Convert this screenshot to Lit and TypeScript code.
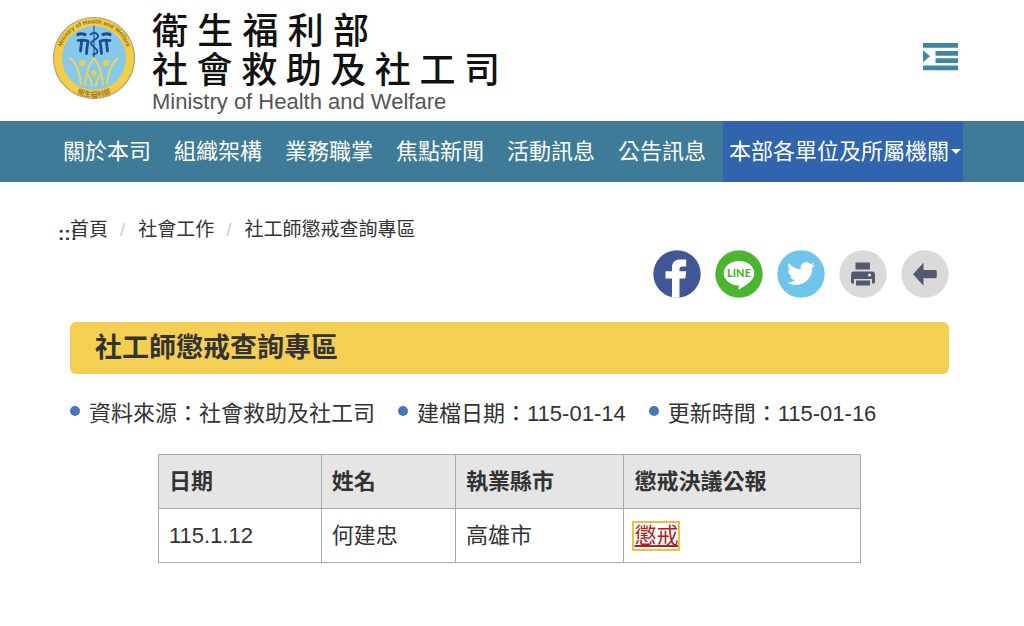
import { LitElement, html, css, svg } from "lit";
import { customElement } from "lit/decorators.js";

const emblem = svg`
  <svg class="emblem" viewBox="0 0 84 84" role="img" aria-label="衛生福利部">
    <defs>
      <path id="arc-top" d="M7.5 42a34.5 34.5 0 0 1 69 0" />
      <path id="arc-bottom" d="M3 42a39 39 0 0 0 78 0" />
    </defs>
    <circle cx="42" cy="42" r="40.5" fill="#f4cd45" stroke="#a9a07c" stroke-width="1.2" />
    <circle cx="42" cy="42" r="32" fill="#86c9ea" />
    <text class="ring-latin"><textPath href="#arc-top" startOffset="50%" text-anchor="middle">Ministry of Health and Welfare</textPath></text>
    <text class="ring-cjk"><textPath href="#arc-bottom" startOffset="50%" text-anchor="middle">衛生福利部</textPath></text>
    <g fill="none" stroke="#1a4d94" stroke-linecap="round" stroke-linejoin="round">
      <path d="M26 18.500q3-1.500 7 0M58 18.500q-3-1.500-7 0" stroke-width="3.2" />
      <path d="M26 24.500q5-1 10 .5-1 6-1.500 12.500M58 24.500q-5-1-10 .5 1 6 1.500 12.500M29.500 26l-1 9M54.500 26l1 9" stroke-width="2.8" />
      <path d="M42 10v32" stroke-width="1.1" />
      <path d="M38.500 18.500q3.500-3 6.500-.5t-2 5.500-4 4.500 4 4 2.500 4-4.500 2.500" stroke-width="1.9" />
    </g>
    <g fill="none" stroke="#edd35a" stroke-width="1.9" stroke-linecap="round">
      <path d="M18 42q9 7 11 26M42 42q-8 10-9 27M42 42q8 10 9 27M66 42q-9 7-11 26" />
      <path d="M36 59q3 4 4 11M48 59q-3 4-4 11" />
    </g>
    <g fill="#f4cd45"><circle cx="30" cy="47" r="3" /><circle cx="54" cy="47" r="3" /><circle cx="42" cy="57" r="2.6" /></g>
  </svg>`;

const facebook = svg`
  <svg class="icon" viewBox="0 0 48 48" aria-hidden="true">
    <circle cx="24" cy="24" r="23.7" fill="#3f5796" />
    <path fill="#fff" d="M19 47.4V28.6h-6.500v-7.400H19v-3.600c0-5.600 3.400-8 8.200-8h6v6.900h-3.700c-2.400 0-3 .9-3 2.800v1.900h6.700l-.8 7.400h-5.900v18.800a24 24 0 0 1-7.500 0z" />
  </svg>`;

const line = svg`
  <svg class="icon" viewBox="0 0 48 48" aria-hidden="true">
    <circle cx="24" cy="24" r="23.7" fill="#4cb52f" />
    <path fill="#fff" d="M24 11c8.500 0 15.300 5.400 15.300 12.200 0 3.200-1.500 5.900-4 8.200-3.200 3-7.400 5.700-10.800 7.800-1 .5-1.200 0-1-.9l.3-2.700C15.300 35.200 8.700 30 8.700 23.200 8.700 16.400 15.500 11 24 11z" />
    <text class="line-word" x="24" y="27" text-anchor="middle">LINE</text>
  </svg>`;

const twitter = svg`
  <svg class="icon" viewBox="0 0 48 48" aria-hidden="true">
    <circle cx="24" cy="24" r="23.7" fill="#6fc4e9" />
    <path fill="#fff" transform="translate(10 9.500) scale(1.170)" d="M23.950 4.570a10 10 0 0 1-2.820.770 4.960 4.960 0 0 0 2.160-2.720c-.950.550-2 .950-3.130 1.180a4.920 4.920 0 0 0-8.380 4.480C7.690 8.090 4.070 6.130 1.640 3.160a4.920 4.920 0 0 0 1.520 6.570 4.900 4.900 0 0 1-2.230-.610v.060a4.920 4.920 0 0 0 3.950 4.830 5 5 0 0 1-2.210.080 4.940 4.940 0 0 0 4.600 3.420A9.870 9.870 0 0 1 0 19.540a14 14 0 0 0 7.550 2.210c9.050 0 14-7.500 14-13.980 0-.210 0-.420-.020-.630a9.940 9.940 0 0 0 2.460-2.550z" />
  </svg>`;

const printer = svg`
  <svg class="icon" viewBox="0 0 48 48" aria-hidden="true">
    <circle cx="24" cy="24" r="23.7" fill="#dadada" />
    <g fill="#535a70">
      <path d="M16.500 12.500h14.500v7H16.500z" />
      <path d="M15 21.500h18a3 3 0 0 1 3 3V32q0 1.500-1.500 1.500H33V29H15v4.500h-1.500Q12 33.500 12 32v-7.500a3 3 0 0 1 3-3z" />
      <path d="M17 30.500h14v5H17z" />
    </g>
    <circle cx="30.500" cy="25" r="1.500" fill="#f1f1f1" />
  </svg>`;

const back = svg`
  <svg class="icon" viewBox="0 0 48 48" aria-hidden="true">
    <circle cx="24" cy="24" r="23.7" fill="#dadada" />
    <path fill="#535a70" d="M12 24.200l10.500-11.500v7.300H34q1.800 0 1.800 1.800v4.600q0 1.800-1.800 1.800H22.500v7.500z" />
  </svg>`;

const menuIcon = svg`
  <svg class="menu-icon" viewBox="0 0 36 28" aria-hidden="true">
    <path fill="#3f86a1" d="M0 0h35v4.800H0zM12.500 8H35v4.800H12.500zM12.500 15.300H35v4.800H12.500zM0 22.500h35v4.800H0zM0 7.300l7 6-7 6z" />
  </svg>`;

@customElement("app-root")
export class AppRoot extends LitElement {
  static styles = css`
    :host {
      display: block;
      min-height: 100vh;
      background: #fff;
      color: #333;
      font: 22px/32px "Liberation Sans", "Noto Sans CJK TC", sans-serif;
    }
    * { box-sizing: border-box; }
    a { color: inherit; text-decoration: none; }
    button {
      margin: 0;
      padding: 0;
      border: 0;
      background: none;
      color: inherit;
      font: inherit;
      cursor: pointer;
    }
    ul, ol { margin: 0; padding: 0; list-style: none; }

    .header {
      display: flex;
      align-items: flex-start;
      justify-content: space-between;
      padding: 9px 65px 4px 52px;
    }
    .brand { display: flex; gap: 16px; color: #111; }
    .emblem { display: block; width: 84px; height: 84px; margin-top: 7px; }
    .ring-latin { font: bold 6px "Liberation Sans", sans-serif; fill: #8a7430; }
    .ring-cjk { font: bold 7px "Noto Sans CJK TC", sans-serif; fill: #a8792c; }
    .names { display: flex; flex-direction: column; align-items: flex-start; }
    .name {
      font-family: "Noto Sans CJK TC", sans-serif;
      font-size: 36px;
      font-weight: 500;
      line-height: 39px;
      text-align: justify;
      text-align-last: justify;
      white-space: nowrap;
    }
    .ministry { width: 217px; }
    .department { width: 348px; }
    .latin { color: #555; font-size: 22px; line-height: 30px; }
    .menu { margin-top: 34px; }
    .menu-icon { display: block; width: 36px; height: 28px; }

    .nav { background: #3d7b99; color: #fff; }
    .nav-list { display: flex; gap: 11px; padding: 0 57px; }
    .nav-link {
      display: flex;
      align-items: center;
      gap: 2px;
      padding: 0 6px;
      line-height: 61px;
      white-space: nowrap;
    }
    .current { padding-right: 2px; background: #3064ae; }
    .caret {
      border: 5px solid transparent;
      border-top-color: #fff;
      border-bottom-width: 0;
    }

    .main { padding: 33px 75px 0 70px; }
    .crumbs { display: flex; font-size: 19px; line-height: 30px; }
    .anchor { margin: 4px -7px 0 -12px; font-weight: 700; }
    .crumb + .crumb::before { content: "/"; padding: 0 13px 0 12px; color: #ccc; }

    .share { display: flex; justify-content: flex-end; gap: 14px; margin-top: 1px; }
    .icon { display: block; width: 48px; height: 48px; }
    .line-word { font: 900 11px Lato, sans-serif; fill: #4cb52f; }

    .title {
      margin: 24px 0 0;
      padding: 0 25px;
      border-radius: 6px;
      background: #f5cf53;
      font-size: 27px;
      font-weight: 700;
      line-height: 52px;
    }
    .meta { display: flex; flex-wrap: wrap; gap: 0 23px; margin-top: 24px; }
    .meta-item { display: flex; gap: 9px; }
    .meta-item::before {
      content: "";
      width: 10px;
      height: 10px;
      margin-top: 8px;
      border-radius: 50%;
      background: #4577b8;
    }

    .records {
      width: 80%;
      margin: 24px auto 0;
      border-collapse: collapse;
      table-layout: fixed;
    }
    .cell { padding: 10px; border: 1px solid #aaa; line-height: 33px; text-align: left; }
    .head { background: #e5e5e5; font-weight: 700; }
    .col-date { width: 23.2%; }
    .col-name { width: 19.1%; }
    .col-city { width: 24%; }
    .ruling {
      display: inline-block;
      outline: 2px solid #f2bd42;
      color: #b3201c;
      line-height: 26px;
      text-decoration: underline;
      text-decoration-thickness: 2px;
      text-underline-offset: 2px;
    }
  `;

  private sections = ["關於本司", "組織架構", "業務職掌", "焦點新聞", "活動訊息", "公告訊息"];
  private path = ["首頁", "社會工作", "社工師懲戒查詢專區"];
  private meta = ["資料來源：社會救助及社工司", "建檔日期：115-01-14", "更新時間：115-01-16"];
  private share = [
    { label: "Facebook", icon: facebook },
    { label: "LINE", icon: line },
    { label: "Twitter", icon: twitter },
  ];

  render() {
    return html`
      <header class="header">
        <a class="brand" href="#">
          ${emblem}
          <span class="names">
            <span class="name ministry">衛生福利部</span>
            <span class="name department">社會救助及社工司</span>
            <span class="latin">Ministry of Health and Welfare</span>
          </span>
        </a>
        <button class="menu" type="button" aria-label="選單">${menuIcon}</button>
      </header>
      <nav class="nav">
        <ul class="nav-list">
          ${this.sections.map((s) => html`<li><a class="nav-link" href="#">${s}</a></li>`)}
          <li>
            <button class="nav-link current" type="button" aria-haspopup="true">
              本部各單位及所屬機關<span class="caret"></span>
            </button>
          </li>
        </ul>
      </nav>
      <main class="main">
        <div class="crumbs">
          <a class="anchor" href="#" accesskey="C">:::</a>
          <ol class="crumbs">
            ${this.path.map((p) => html`<li class="crumb"><a href="#">${p}</a></li>`)}
          </ol>
        </div>
        <div class="share">
          ${this.share.map((s) => html`<a href="#" aria-label=${s.label}>${s.icon}</a>`)}
          <button type="button" aria-label="列印">${printer}</button>
          <button type="button" aria-label="回上一頁">${back}</button>
        </div>
        <h1 class="title">社工師懲戒查詢專區</h1>
        <ul class="meta">
          ${this.meta.map((m) => html`<li class="meta-item">${m}</li>`)}
        </ul>
        <table class="records">
          <thead>
            <tr>
              <th class="cell head col-date" scope="col">日期</th>
              <th class="cell head col-name" scope="col">姓名</th>
              <th class="cell head col-city" scope="col">執業縣市</th>
              <th class="cell head" scope="col">懲戒決議公報</th>
            </tr>
          </thead>
          <tbody>
            <tr>
              <td class="cell">115.1.12</td>
              <td class="cell">何建忠</td>
              <td class="cell">高雄市</td>
              <td class="cell"><a class="ruling" href="#">懲戒</a></td>
            </tr>
          </tbody>
        </table>
      </main>
    `;
  }
}
